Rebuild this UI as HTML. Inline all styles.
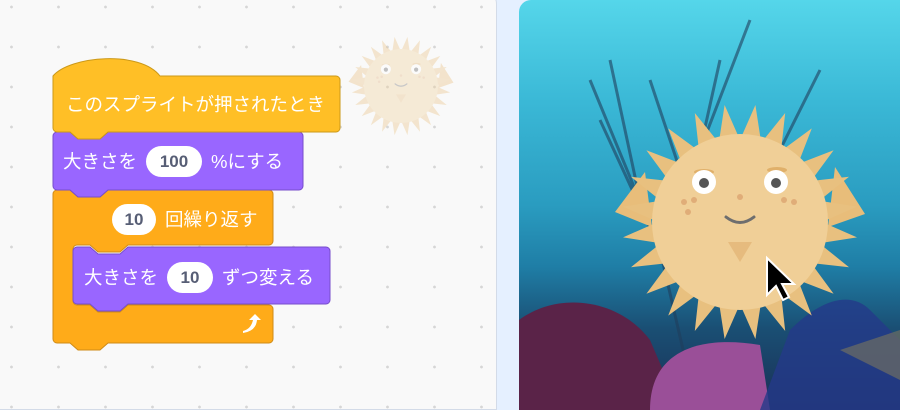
<!DOCTYPE html>
<html><head><meta charset="utf-8"><style>
*{margin:0;padding:0;box-sizing:border-box}
body{width:900px;height:400px;overflow:hidden;background:#e5f0ff;position:relative;font-family:"Liberation Sans","Noto Sans CJK JP",sans-serif}
#ws{position:absolute;left:-10px;top:-10px;width:507px;height:420px;background-color:#f9f9f9;border:1px solid #d3dbe8;border-radius:0 14px 0 0;
background-image:radial-gradient(circle,#d6d6d6 1.2px,transparent 1.6px);background-size:47px 40px;background-position:-3px -4px}
#stage{position:absolute;left:519px;top:0;width:400px;height:410px;border-radius:12px 0 0 0;overflow:hidden;
background:linear-gradient(180deg,#55d6ea 0%,#3ab8d6 25%,#2a9cc0 50%,#1f7ea6 65%,#1a4f74 80%,#1a2f55 100%)}
.blk{position:absolute;color:#fff;font-size:18.5px;display:flex;align-items:center;white-space:nowrap}
.pill{display:inline-block;background:#fff;color:#575e75;border-radius:16px;height:31px;line-height:31px;text-align:center;font-size:17px;font-weight:bold;margin:0 9px}
svg{position:absolute;left:0;top:0}
</style></head><body>
<div id="ws"></div>
<svg width="500" height="400" viewBox="0 0 500 400">
<g opacity="0.35" transform="translate(401,86) scale(0.42)"><g id="g1"></g></g>
<path d="M57 190 H70 l8 7 h22 l8 -7 H269 a4 4 0 0 1 4 4 V241 a4 4 0 0 1 -4 4 H128 l-8 7 H98 l-8 -7 H77 a4 4 0 0 0 -4 4 V301 a4 4 0 0 0 4 4 H90 l8 7 h22 l8 -7 H269 a4 4 0 0 1 4 4 V339 a4 4 0 0 1 -4 4 H108 l-8 7 H78 l-8 -7 H57 a4 4 0 0 1 -4 -4 V194 a4 4 0 0 1 4 -4 Z" fill="#ffab19" stroke="#cf8b17" stroke-width="1"/>
<path d="M73 251 a4 4 0 0 1 4 -4 h13 l8 7 h22 l8 -7 h198 a4 4 0 0 1 4 4 v49 a4 4 0 0 1 -4 4 h-198 l-8 7 h-22 l-8 -7 h-13 a4 4 0 0 1 -4 -4 z" fill="#9966ff" stroke="#774dcb" stroke-width="1"/>
<path d="M53 136 a4 4 0 0 1 4 -4 h13 l8 7 h22 l8 -7 h191 a4 4 0 0 1 4 4 v50 a4 4 0 0 1 -4 4 h-191 l-8 7 h-22 l-8 -7 h-13 a4 4 0 0 1 -4 -4 z" fill="#9966ff" stroke="#774dcb" stroke-width="1"/>
<path d="M53 76 C70 56 140 50 160 76 h176 a4 4 0 0 1 4 4 v48 a4 4 0 0 1 -4 4 h-228 l-8 7 h-22 l-8 -7 h-13 a4 4 0 0 1 -4 -4 z" fill="#ffbf26" stroke="#cc9918" stroke-width="1"/>
<path d="M243 331 q8 -2 10 -11 l-4 0 l6 -6 l6 6 l-4 0 q-1 11 -14 13z" fill="#fff"/>
</svg>
<div class="blk" style="left:66px;top:88px;height:32px">このスプライトが押されたとき</div>
<div class="blk" style="left:63px;top:145px;height:32px">大きさを<span class="pill" style="width:56px">100</span>%にする</div>
<div class="blk" style="left:103px;top:203px;height:32px"><span class="pill" style="width:44px">10</span>回繰り返す</div>
<div class="blk" style="left:84px;top:261px;height:32px">大きさを<span class="pill" style="width:46px">10</span>ずつ変える</div>
<div id="stage">
<svg width="400" height="410" viewBox="519 0 400 410">
<g stroke="#1f3d5c" stroke-width="3" fill="none" opacity="0.6">
<path d="M690 380 L660 250 L600 120 M660 250 L590 80 M640 200 L610 60 M675 280 L700 150 L750 20 M700 150 L720 60 M690 200 L650 80 M720 300 L780 150 L820 70"/>
</g>
<path d="M519 320 C560 290 620 300 650 340 L680 410 L519 410Z" fill="#5a2348"/>
<path d="M650 410 C650 350 700 335 760 345 L770 410Z" fill="#9a4f98"/>
<path d="M760 410 L790 330 C820 300 850 290 870 310 L900 340 L900 410Z" fill="#243a8a" opacity="0.8"/>
<path d="M840 350 L900 330 L900 380 Z" fill="#6d6d62" opacity="0.7"/>
<g transform="translate(740,222)"><g id="g2"></g></g>
<path d="M767 258 l0 37 l9 -9 l7 14 l6 -3 l-7 -13 l12 0 z" fill="#000" stroke="#fff" stroke-width="2"/>
</svg>
</div>
<script>
var s='',n=24;
for(var i=0;i<n;i++){var a=i/n*Math.PI*2,b=(i+0.5)/n*Math.PI*2;
s+=(i?'L':'M')+(Math.cos(a)*82).toFixed(1)+' '+(Math.sin(a)*82).toFixed(1)+'L'+(Math.cos(b)*118).toFixed(1)+' '+(Math.sin(b)*118).toFixed(1);}
s+='Z';
var f='<path d="M-95 -50 L-125 -10 L-88 5Z M95 -55 L125 -8 L88 5Z" fill="#e8bd7a"/>'+
'<path d="'+s+'" fill="#e8c07f"/><circle r="88" fill="#f0cf97"/>'+
'<ellipse cx="-36" cy="-50" rx="10" ry="3" fill="#e0b06a"/><ellipse cx="37" cy="-52" rx="10" ry="3" fill="#e0b06a"/>'+
'<circle cx="-36" cy="-40" r="12" fill="#fff"/><circle cx="-36" cy="-39" r="5" fill="#555"/>'+
'<circle cx="36" cy="-40" r="12" fill="#fff"/><circle cx="36" cy="-39" r="5" fill="#555"/>'+
'<circle cx="-56" cy="-20" r="3" fill="#e0ad78"/><circle cx="-46" cy="-22" r="3" fill="#e0ad78"/><circle cx="-52" cy="-10" r="3" fill="#e0ad78"/><circle cx="54" cy="-20" r="3" fill="#e0ad78"/><circle cx="44" cy="-22" r="3" fill="#e0ad78"/><circle cx="0" cy="-25" r="3" fill="#e0ad78"/>'+
'<path d="M-14 -5 Q0 6 14 -5" stroke="#6e6e6e" stroke-width="3" fill="none" stroke-linecap="round"/>'+
'<path d="M-12 20 L12 20 L0 40Z" fill="#e6bb7e"/>';
document.getElementById('g1').innerHTML=f;document.getElementById('g2').innerHTML=f;
</script>
</body></html>
